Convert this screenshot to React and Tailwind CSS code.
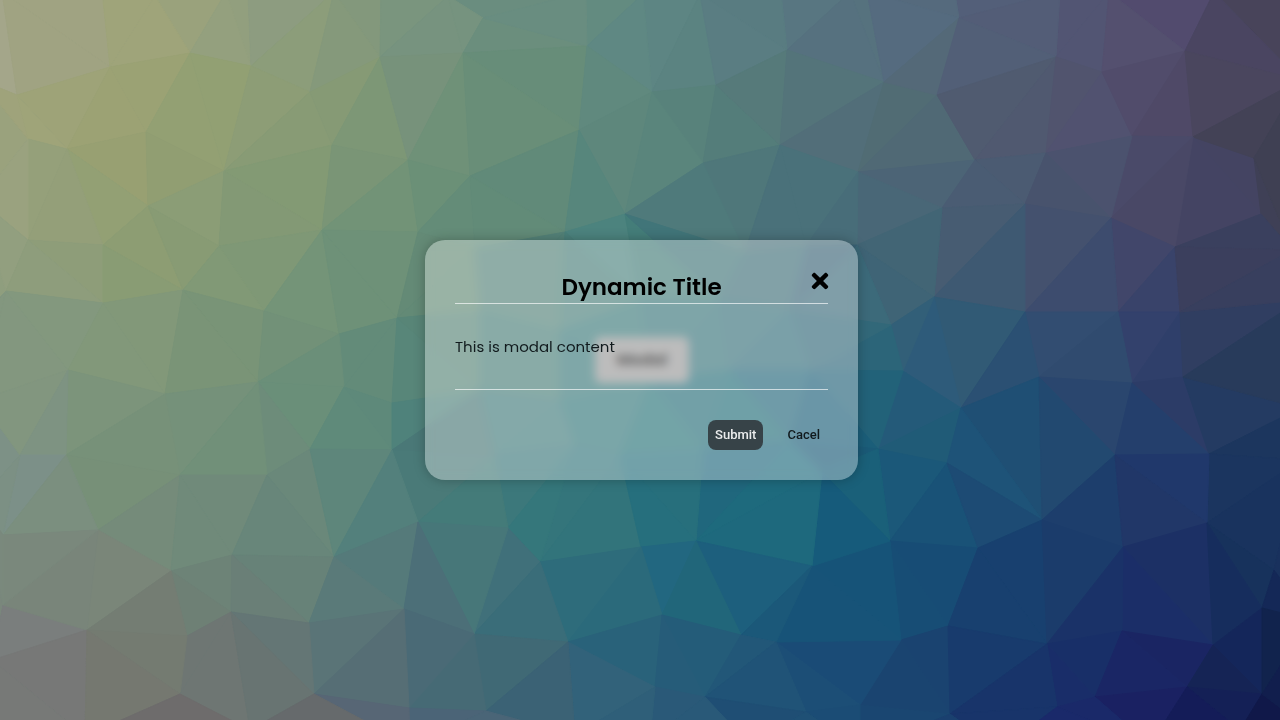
import React from 'react';
import { FaTimes } from 'react-icons/fa';

// corners of the low-poly wallpaper, on a 1280x720 canvas
const points = [
  [-60, -60], [640, -90], [1340, -60], [-60, 360], [1340, 360], [-60, 780], [640, 810], [1340, 780],
  [-20, 80], [-20, 200], [-20, 400], [-20, 500], [-8, 660],
  [2, -8], [102, -10], [155, -4], [226, -8], [248, -6], [334, -8], [381, -8], [448, -4], [586, -8], [643, -6],
  [700, -6], [781, -8], [850, -8], [867, -8], [955, -6], [1060, -8], [1109, -8], [1214, -8], [1300, -10],
  [17, 95], [110, 67], [190, 53], [67, 149], [146, 132], [28, 139], [251, 66], [224, 171], [148, 206], [310, 92],
  [332, 145], [380, 57], [408, 160], [322, 230], [463, 53], [483, 18], [587, 46], [652, 92], [579, 130], [470, 176],
  [716, 85], [703, 163], [787, 50], [780, 145], [625, 214], [884, 82], [858, 172], [959, 18], [937, 95], [1056, 57],
  [1046, 153], [975, 160], [1102, 72], [1185, 51], [1132, 136], [1193, 137], [1254, 158], [1261, 214], [1300, 80],
  [1025, 204], [1111, 218], [942, 208], [28, 240], [103, 245], [219, 246], [6, 291], [103, 303], [183, 290],
  [264, 311], [339, 334], [397, 318], [68, 370], [165, 394], [258, 382], [344, 387], [392, 403], [310, 449],
  [66, 455], [180, 475], [267, 475], [392, 450], [20, 455], [418, 232], [857, 245], [1175, 247], [934, 297],
  [1025, 312], [1118, 312], [1180, 312], [1183, 377], [1132, 383], [1039, 377], [961, 408], [903, 371], [891, 325],
  [878, 449], [1115, 455], [1209, 454], [947, 463], [1300, 300], [1300, 408], [1300, 460], [1292, 250],
  [480, 310], [475, 248], [565, 232], [560, 330], [640, 300], [720, 300], [745, 252], [806, 246], [790, 310],
  [480, 390], [560, 400], [650, 380], [730, 370], [810, 370], [495, 455], [575, 445], [620, 455], [703, 450],
  [790, 440], [822, 472],
  [890, 541], [978, 548], [1042, 520], [1123, 547], [1207, 523], [1274, 570], [1213, 645], [1262, 608], [1122, 631],
  [1047, 644], [948, 626], [901, 640], [860, 705], [1187, 687], [1262, 694], [1057, 707], [1095, 697], [950, 714],
  [508, 528], [540, 562], [641, 547], [696, 541], [812, 566], [662, 615], [568, 642], [474, 634], [741, 635],
  [776, 642], [655, 687], [705, 697], [806, 712], [486, 711], [98, 530], [171, 571], [232, 555], [334, 557],
  [418, 522], [231, 612], [309, 623], [404, 609], [187, 636], [87, 630], [3, 605], [3, 535], [180, 694], [314, 694],
  [409, 708], [-5, 732], [85, 736], [250, 730], [410, 745], [575, 735], [650, 740], [750, 745], [860, 750],
  [1000, 750], [1150, 745], [1240, 730], [1310, 620], [1310, 730],
];

// x, y, colour of the facet that covers the spot
const tones = `
5 40 a4a68a,60 40 a0a382,140 30 9fa47a,190 15 9aa27c,220 35 94a07e,275 20 8d9c80,300 45 8c9d7a,340 40 85997b,
365 15 83987c,400 30 7a957e,410 100 77927b,45 115 a0a479,60 125 9da278,110 100 9ca274,150 75 9ba274,180 110 93a073,
220 80 92a073,270 100 8d9d76,330 110 869a75,355 110 7d9776,300 125 889b75,280 180 839a74,370 170 7a9576,
390 200 729377,425 190 6b9077,100 170 97a074,60 180 949f79,15 170 9aa27f,125 150 98a072,170 160 919e72,
190 200 8c9d76,90 210 93a074,190 225 859a74,440 25 77937f,530 15 698d80,530 40 6b8e7d,520 70 678d79,
500 100 698e78,455 110 6f9178,605 20 638b80,615 55 5f8883,615 80 60897e,600 120 5e877c,660 40 5d8583,
690 55 5b8381,640 150 5a857c,680 120 58827b,540 170 618a79,600 170 57867c,740 50 5a7d82,760 100 567a7a,
730 120 547d7a,670 190 527d7c,740 180 4f777a,745 215 4f777b,820 10 587681,850 50 56717f,820 80 54747a,
840 120 526e79,820 160 50707a,800 190 4a717a,785 225 4a717a,840 200 486d79,615 225 4c837e,640 232 437a7d,
700 225 4f7a7b,480 215 628b78,560 215 5f8976,
910 30 556b7f,870 60 57787e,930 60 546978,915 85 526a77,880 130 516c74,930 130 506975,1000 10 535f79,
1000 30 535b76,980 60 525f77,1010 90 515b6e,970 125 4e5c74,940 170 4d6577,1085 30 525573,1080 90 51546e,
1070 120 515270,1120 50 54506f,1150 20 524b6e,1150 65 534e6c,1150 100 504c6b,1170 120 4f4967,1250 10 48445a,
1220 50 4a4561,1230 90 4a465e,1220 130 48445b,1270 130 424255,1270 180 3f4053,1225 180 444463,1170 150 4a4a69,
1090 170 4b526e,1000 180 4b5b72,950 190 4a5f74,1060 190 48536d,890 195 496777,1000 225 455d74,920 230 416575,
1070 230 42526f,1160 200 494866,1235 235 3a405e,880 260 446775,900 290 3f6476,960 260 475c72,1000 270 3e5972,
1050 260 44516e,1090 280 3d4c6e,1140 270 41466a,1160 295 39436a,1200 290 383f5f,1230 255 3c3f5c,1210 330 303e61,
1250 350 283b5b,1230 400 243b62,1260 430 1c365e,1190 410 2c3c67,1150 350 33416c,1165 360 2f3f6a,1090 350 304b6f,
1080 325 324d71,1010 430 1f4f74,1060 430 224970,1080 400 2a466e,1150 420 243f6c,1010 360 2b5073,960 340 315a75,
990 330 2f5874,925 340 2e5b7a,900 350 325f78,870 300 3c6a7a,870 350 2c6579,880 390 226279,925 410 245a79,
930 440 205b77,900 465 1b597a,985 430 1e5076,960 465 1e5378,1160 475 20386b,1260 480 1b355f,1090 480 1e416f,
870 510 1a6079,900 510 1c5778,940 520 195277,985 510 1d4b74,1050 500 20436f,1100 520 1d3e6c,1170 500 213768,
1165 590 1c3065,1140 600 1b2e68,1080 570 1b3c6b,1020 590 18406f,930 580 174c75,870 600 165378,900 680 1a4470,
1000 650 183b6d,990 690 18346a,1090 620 1a3268,1090 660 182f68,1160 640 1a2563,1140 670 1a2665,1150 705 1a2162,
1220 685 152455,1230 540 17325c,1225 580 162d5d,1270 650 11234d,1210 710 141c58,1270 712 101849,1240 640 14265a,
1070 715 1a296a,460 505 447b79,470 560 477779,500 580 40707a,520 540 41777b,550 510 35777b,580 520 32747b,
660 520 266f7d,740 520 1e667e,780 500 1e6a7d,830 520 165b7b,560 600 346f7a,600 600 2b6b7b,665 575 226780,
700 590 21667a,750 590 1d5f7d,800 620 1a5678,840 600 165378,850 560 175077,610 640 29627a,700 640 245c79,
740 665 225778,780 680 205377,840 680 1a4b76,600 680 32627a,540 680 3b6275,500 660 406975,460 690 466a75,
455 640 4d7178,470 715 4b6477,530 610 3a6d79,760 710 1f4e74,680 710 2a5978,20 500 7c9084,50 520 7b8f7f,
120 500 779078,150 540 758b7a,210 520 708a7a,280 510 68867a,340 510 5f877b,380 530 56807c,400 490 4b7e7b,
20 560 7a887c,60 590 79857a,120 570 7a8679,130 610 747d73,190 590 6e8075,210 580 6d8377,270 590 6a7f77,
300 570 678278,360 590 5a7a79,390 560 557a7a,30 640 7a7e7d,60 690 777877,110 670 757a71,150 640 747b71,
210 660 6e7673,260 670 687472,280 640 647675,350 640 5a7477,370 680 566e75,130 705 75746d,200 710 6e6c6c,
290 712 666a6c,360 710 576675,420 600 4c6f78,420 650 4a6a76,15 265 929f7f,60 270 8e9d7c,75 260 8e9d79,
130 280 899c74,150 260 8d9d73,190 260 889b74,250 270 7f9876,300 290 749478,370 280 6e9178,120 330 82987a,
60 310 83987e,20 350 83977f,210 350 7a9477,290 340 729178,320 360 6b8f79,370 360 638b79,410 360 588679,
405 420 4f827b,120 410 7c947b,100 450 7b947a,30 410 82967f,50 440 7e9382,150 450 779179,190 430 75917a,
240 430 719079,290 430 6d8c7a,310 420 6a8f79,360 410 5f8a7a,350 460 5d857b,280 475 6a887a,20 470 7c9089,
60 475 7c8f82,450 270 648a76,450 350 588577,450 450 4a7877,520 280 538278,520 360 4a7f79,640 270 447d79,
640 340 3c7a7a,520 430 427b7b,590 420 34777a,650 430 297379,700 330 38737a,730 400 236d79,690 270 417579,
770 280 3f6f79,830 270 3b6477,790 350 336d7a,800 420 1c627b,840 440 1a5a77
`.split(',').map((entry) => {
  const [x, y, hex] = entry.trim().split(' ');
  return { x: Number(x), y: Number(y), rgb: [0, 2, 4].map((i) => parseInt(hex.slice(i, i + 2), 16)) };
});

const circumcircle = ([ax, ay], [bx, by], [cx, cy]) => {
  const d = 2 * (ax * (by - cy) + bx * (cy - ay) + cx * (ay - by));
  const a = ax * ax + ay * ay;
  const b = bx * bx + by * by;
  const c = cx * cx + cy * cy;
  const x = (a * (by - cy) + b * (cy - ay) + c * (ay - by)) / d;
  const y = (a * (cx - bx) + b * (ax - cx) + c * (bx - ax)) / d;
  return { x, y, r: (ax - x) ** 2 + (ay - y) ** 2 };
};

// Bowyer-Watson
const triangulate = (list) => {
  const all = [...list, [-9000, -8000], [10000, -8100], [600, 12000]];
  const n = list.length;
  const make = (i, j, k) => ({ ids: [i, j, k], circle: circumcircle(all[i], all[j], all[k]) });
  let triangles = [make(n, n + 1, n + 2)];
  for (let p = 0; p < n; p++) {
    const [x, y] = all[p];
    const edges = new Map();
    triangles = triangles.filter(({ ids, circle }) => {
      if ((x - circle.x) ** 2 + (y - circle.y) ** 2 >= circle.r) return true;
      [[0, 1], [1, 2], [2, 0]].forEach(([s, e]) => {
        const edge = [ids[s], ids[e]].sort((l, m) => l - m);
        const key = edge.join('-');
        if (edges.has(key)) edges.delete(key);
        else edges.set(key, edge);
      });
      return false;
    });
    edges.forEach(([s, e]) => triangles.push(make(s, e, p)));
  }
  return triangles
    .filter(({ ids }) => ids.every((id) => id < n))
    .map(({ ids }) => ids.map((id) => all[id]));
};

const side = (p, a, b) => (p.x - b[0]) * (a[1] - b[1]) - (a[0] - b[0]) * (p.y - b[1]);

const contains = ([a, b, c], p) => {
  const sides = [side(p, a, b), side(p, b, c), side(p, c, a)];
  return sides.every((s) => s >= 0) || sides.every((s) => s <= 0);
};

const facetColor = (triangle) => {
  const inside = tones.filter((tone) => contains(triangle, tone));
  const cx = (triangle[0][0] + triangle[1][0] + triangle[2][0]) / 3;
  const cy = (triangle[0][1] + triangle[1][1] + triangle[2][1]) / 3;
  const sum = [0, 0, 0];
  let total = 0;
  (inside.length ? inside : tones).forEach((tone) => {
    const weight = 1 / (((tone.x - cx) ** 2 + (tone.y - cy) ** 2) ** 2 + 1);
    total += weight;
    tone.rgb.forEach((value, i) => {
      sum[i] += value * weight;
    });
  });
  return `rgb(${sum.map((value) => Math.round(value / total)).join(',')})`;
};

const facets = triangulate(points).map((triangle) => ({
  shape: triangle.map((point) => point.join(',')).join(' '),
  color: facetColor(triangle),
}));

const Wallpaper = () => {
  return (
    <svg
      className="absolute inset-0 w-full h-full"
      viewBox="0 0 1280 720"
      preserveAspectRatio="xMidYMid slice"
      aria-hidden="true"
    >
      {facets.map(({ shape, color }) => (
        <polygon key={shape} points={shape} fill={color} stroke={color} strokeWidth="1" />
      ))}
    </svg>
  );
};

const Modal = ({ title, children }) => {
  return (
    <div
      role="dialog"
      aria-labelledby="modal-title"
      className="relative w-[433px] p-[30px] rounded-[20px] bg-white/35 backdrop-blur-[5px] shadow-[0_0_12px_rgba(0,0,0,0.25)]"
    >
      <h2
        id="modal-title"
        className="h-[34px] border-b border-white/65 text-center text-[23px] leading-[34px] font-semibold text-black"
      >
        {title}
      </h2>
      <button type="button" aria-label="Close" className="absolute top-[29px] right-[29px] text-black">
        <FaTimes className="w-[18px] h-6" />
      </button>
      <div className="py-[30px] border-b border-white/65 text-[15px] leading-[25px] font-normal text-[#111a1d]">
        {children}
      </div>
      <div className="mt-[30px] flex justify-end gap-4 font-['Roboto',sans-serif] text-[13px] font-medium">
        <button type="button" className="h-[30px] px-[7px] rounded-lg bg-[#374348] text-white/90">
          Submit
        </button>
        <button type="button" className="h-[30px] px-2 rounded-lg text-[#111a1d]">
          Cacel
        </button>
      </div>
    </div>
  );
};

const App = () => {
  return (
    <main className="relative min-h-screen overflow-hidden bg-[#437a7d] font-['Poppins','Inter',sans-serif]">
      <Wallpaper />
      <div className="absolute inset-0 pl-1 flex items-center justify-center">
        <button
          type="button"
          className="w-[94px] h-[46px] rounded-md bg-[#999999] text-base font-semibold text-black"
        >
          Modal
        </button>
      </div>
      <div className="relative min-h-screen pl-[3px] flex items-center justify-center">
        <Modal title="Dynamic Title">
          <p>This is modal content</p>
        </Modal>
      </div>
    </main>
  );
};

export default App;
